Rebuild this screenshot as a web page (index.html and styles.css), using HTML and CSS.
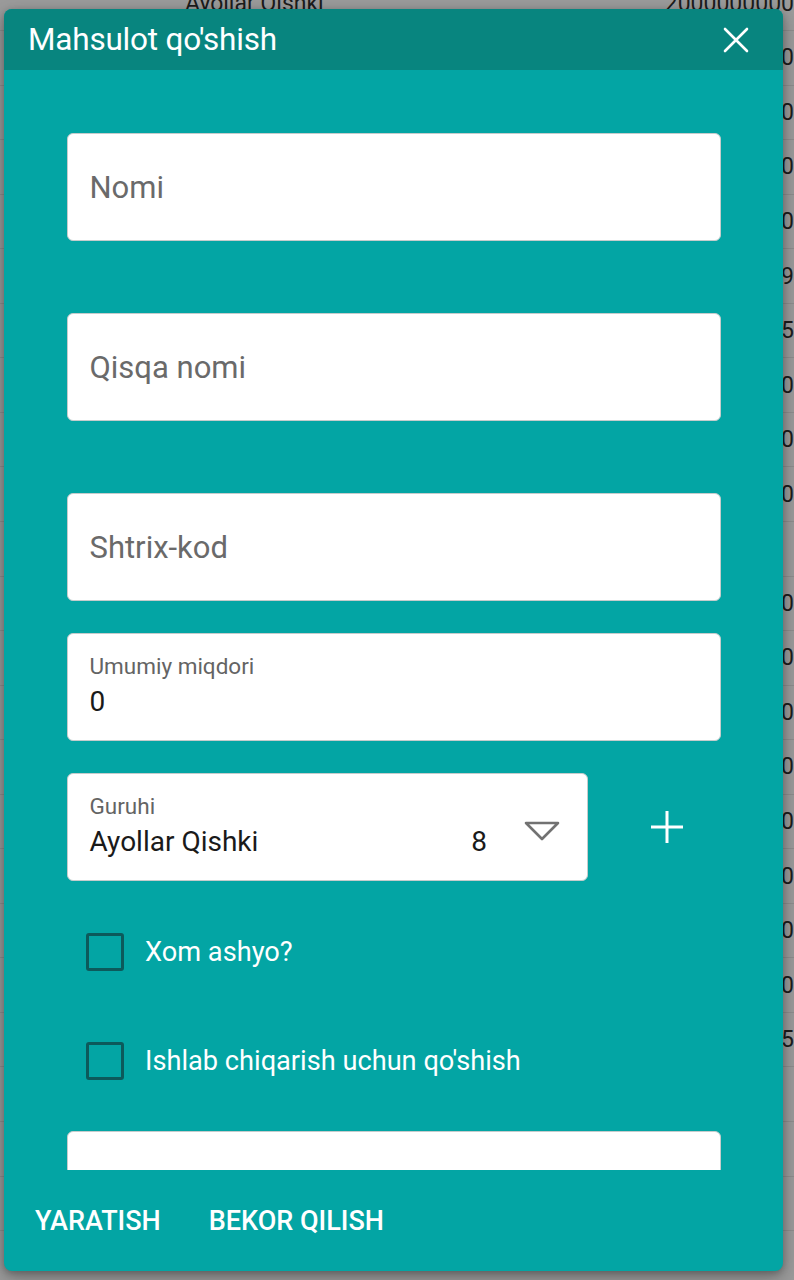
FILE: index.html
```html
<!DOCTYPE html>
<html lang="uz">
<head>
<meta charset="utf-8">
<title>Mahsulot qo'shish</title>
<link rel="stylesheet" href="styles.css">
</head>
<body>
<div class="table">
  <div class="row"><span class="name">Ayollar Qishki</span><span class="num">2000000000</span></div>
  <div class="row"><span class="name"></span><span class="num">1500000000</span></div>
  <div class="row"><span class="name"></span><span class="num">1500000000</span></div>
  <div class="row"><span class="name"></span><span class="num">1500000000</span></div>
  <div class="row"><span class="name"></span><span class="num">1500000000</span></div>
  <div class="row"><span class="name"></span><span class="num">1500000009</span></div>
  <div class="row"><span class="name"></span><span class="num">1500000005</span></div>
  <div class="row"><span class="name"></span><span class="num">1500000000</span></div>
  <div class="row"><span class="name"></span><span class="num">1500000000</span></div>
  <div class="row"><span class="name"></span><span class="num">1500000000</span></div>
  <div class="row"><span class="name"></span><span class="num">150000000</span></div>
  <div class="row"><span class="name"></span><span class="num">1500000000</span></div>
  <div class="row"><span class="name"></span><span class="num">1500000000</span></div>
  <div class="row"><span class="name"></span><span class="num">1500000000</span></div>
  <div class="row"><span class="name"></span><span class="num">1500000000</span></div>
  <div class="row"><span class="name"></span><span class="num">1500000000</span></div>
  <div class="row"><span class="name"></span><span class="num">1500000000</span></div>
  <div class="row"><span class="name"></span><span class="num">1500000000</span></div>
  <div class="row"><span class="name"></span><span class="num">1500000000</span></div>
  <div class="row"><span class="name"></span><span class="num">1500000005</span></div>
  <div class="row"><span class="name"></span><span class="num"></span></div>
  <div class="row"><span class="name"></span><span class="num"></span></div>
  <div class="row"><span class="name"></span><span class="num"></span></div>
  <div class="row"><span class="name"></span><span class="num"></span></div>
</div>

<div class="dialog">
  <div class="dialog-header">
    <div class="dialog-title">Mahsulot qo'shish</div>
    <button class="close-btn" aria-label="close">
      <svg width="26" height="26" viewBox="0 0 26 26"><path d="M2 2 L24 24 M24 2 L2 24" stroke="#fff" stroke-width="2.6" stroke-linecap="round" fill="none"/></svg>
    </button>
  </div>
  <div class="dialog-body">
    <div class="form">
      <div class="field mb-lg"><span class="placeholder">Nomi</span></div>
      <div class="field mb-lg"><span class="placeholder">Qisqa nomi</span></div>
      <div class="field mb-sm"><span class="placeholder">Shtrix-kod</span></div>
      <div class="field filled mb-sm">
        <div class="label">Umumiy miqdori</div>
        <div class="value">0</div>
      </div>
      <div class="select-row">
        <div class="field filled select">
          <div class="select-content">
            <div class="label">Guruhi</div>
            <div class="value value-row"><span>Ayollar Qishki</span><span>8</span></div>
          </div>
          <svg class="arrow" width="36" height="20" viewBox="0 0 36 20"><path d="M2 2 L34 2 L18 18 Z" stroke="#727272" stroke-width="2.6" stroke-linejoin="round" fill="none"/></svg>
        </div>
        <button class="add-btn" aria-label="add">
          <svg width="34" height="34" viewBox="0 0 34 34"><path d="M17 1 V33 M1 17 H33" stroke="#fff" stroke-width="3" fill="none"/></svg>
        </button>
      </div>
      <label class="check-row"><span class="checkbox"></span><span class="check-label">Xom ashyo?</span></label>
      <label class="check-row"><span class="checkbox"></span><span class="check-label">Ishlab chiqarish uchun qo'shish</span></label>
      <div class="field partial"></div>
    </div>
  </div>
  <div class="dialog-footer">
    <button class="text-btn">YARATISH</button>
    <button class="text-btn">BEKOR QILISH</button>
  </div>
</div>
</body>
</html>
```

FILE: styles.css
```css
* { box-sizing: border-box; }
html, body {
  margin: 0;
  padding: 0;
  height: 1280px;
  overflow: hidden;
  background: #9b9b9b;
  font-family: Roboto, "Liberation Sans", Arial, sans-serif;
}
.table {
  margin-top: -23.5px;
  display: flex;
  flex-direction: column;
}
.row {
  height: 54.56px;
  border-bottom: 1px solid #8d8d8d;
  display: flex;
  align-items: center;
  font-size: 23px;
  color: #1c1c1c;
  white-space: nowrap;
}
.name {
  margin-left: 185px;
  width: 482px;
}
.dialog {
  position: absolute;
  left: 4px;
  top: 9px;
  width: 779px;
  height: 1262px;
  border-radius: 8px;
  background: #03a5a4;
  box-shadow: 0 6px 18px rgba(0,0,0,0.3), 0 2px 6px rgba(0,0,0,0.2);
  display: flex;
  flex-direction: column;
  overflow: hidden;
}
.dialog-header {
  height: 61px;
  flex: none;
  background: #08857f;
  display: flex;
  align-items: center;
  justify-content: space-between;
  padding-left: 24px;
  padding-right: 23px;
}
.dialog-title {
  color: #fff;
  font-size: 31.5px;
  letter-spacing: -0.2px;
}
.close-btn, .add-btn, .text-btn {
  background: none;
  border: 0;
  padding: 0;
  margin: 0;
  cursor: pointer;
  font-family: inherit;
}
.close-btn {
  width: 48px;
  height: 48px;
  display: flex;
  align-items: center;
  justify-content: center;
}
.dialog-body {
  flex: 1;
  overflow: hidden;
  padding: 63px 62px 0 63px;
}
.form {
  display: flex;
  flex-direction: column;
}
.field {
  height: 108px;
  background: #fff;
  border: 1.5px solid #c5cccc;
  border-radius: 6px;
  display: flex;
  align-items: center;
  padding: 0 21.5px;
  flex: none;
}
.mb-lg { margin-bottom: 72px; }
.mb-sm { margin-bottom: 32px; }
.placeholder {
  font-size: 31px;
  color: #6a6a6a;
}
.field.filled {
  flex-direction: column;
  align-items: stretch;
  justify-content: flex-start;
  padding-top: 18px;
}
.label {
  font-size: 22.5px;
  line-height: 28px;
  color: #646464;
}
.value {
  margin-top: 4px;
  font-size: 28px;
  line-height: 36px;
  color: #1a1a1a;
}
.select-row {
  display: flex;
  align-items: center;
}
.field.select {
  width: 521px;
  flex-direction: row;
  align-items: flex-start;
  padding: 18px 27px 0 21.5px;
}
.select-content {
  flex: 1;
  display: flex;
  flex-direction: column;
}
.value-row {
  display: flex;
  justify-content: space-between;
}
.arrow {
  margin-left: 37px;
  margin-top: 29px;
  flex: none;
}
.add-btn {
  width: 92px;
  height: 92px;
  margin-left: 33px;
  display: flex;
  align-items: center;
  justify-content: center;
}
.check-row {
  height: 109.5px;
  margin-top: 16px;
  display: flex;
  align-items: center;
  padding-left: 19px;
  margin-bottom: -16px;
}
.check-row + .check-row { margin-top: 16px; }
.checkbox {
  width: 38px;
  height: 38px;
  border: 3px solid #0c5a5b;
  border-radius: 3px;
  flex: none;
}
.check-label {
  margin-left: 21px;
  font-size: 27.2px;
  color: #fff;
}
.field.partial {
  margin-top: 31px;
}
.dialog-footer {
  height: 101px;
  flex: none;
  display: flex;
  align-items: center;
  gap: 48px;
  padding-left: 31px;
}
.text-btn {
  color: #fff;
  font-size: 27px;
  font-weight: 500;
  letter-spacing: 0;
}
```
